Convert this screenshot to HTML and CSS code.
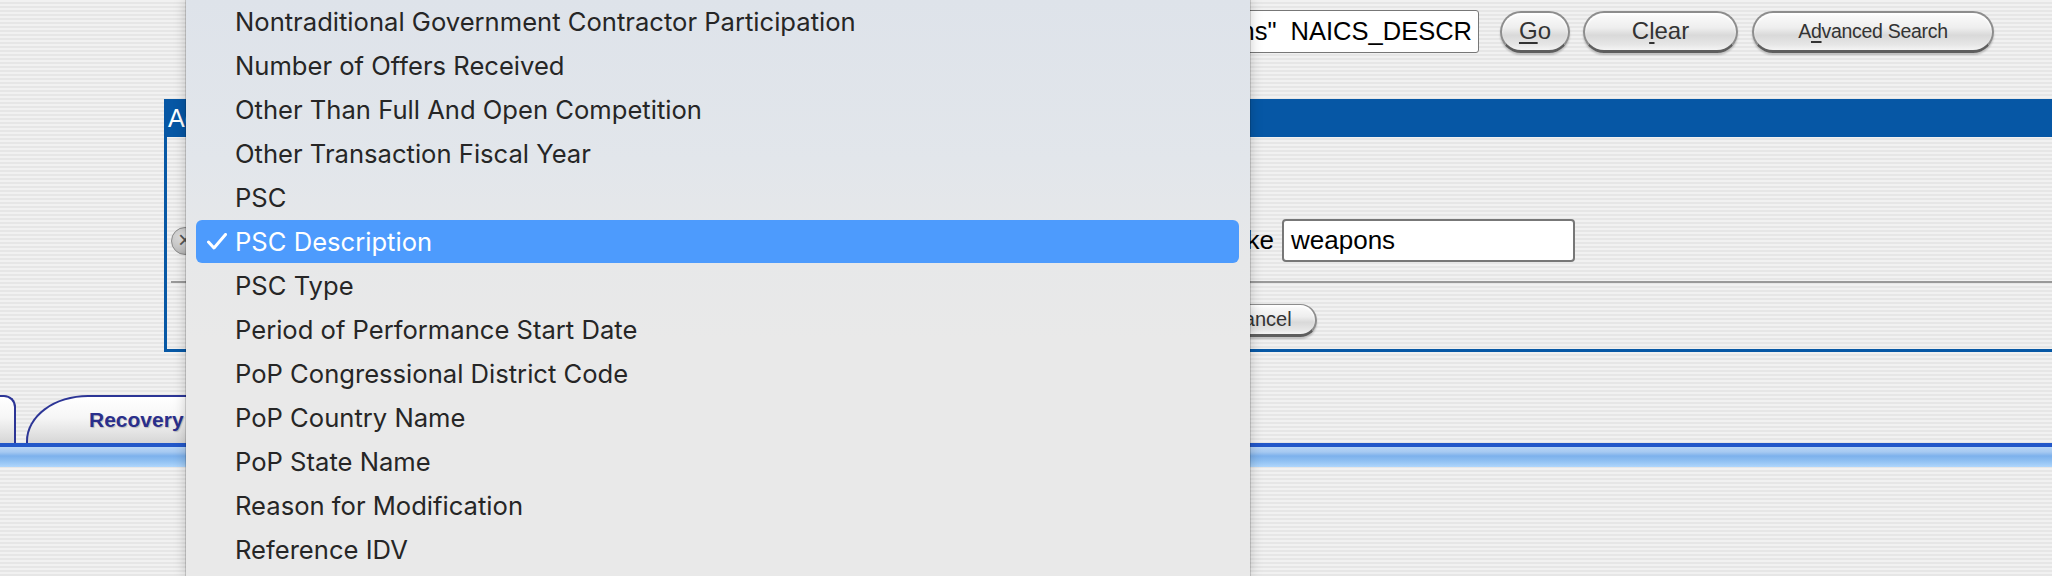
FILE: index.html
```html
<!DOCTYPE html>
<html lang="en">
<head>
    <meta charset="UTF-8">
    <title>Advanced Search</title>
    <link rel="stylesheet" href="styles.css">
</head>
<body>
    <div class="topbar">
        <div class="search-box"><span>PSC_DESCRIPTION like "weapons"&nbsp; NAICS_DESCR</span></div>
        <button class="aqua go"><u>G</u>o</button>
        <button class="aqua clear">C<u>l</u>ear</button>
        <button class="aqua advanced">A<u>d</u>vanced Search</button>
    </div>

    <!-- criteria dialog -->
    <div class="dialog">
        <div class="dialog-title">Advanced Search</div>
        <div class="dialog-body">
            <div class="criteria-row">
                <span class="remove-btn">&times;</span>
                <div class="field-select">PSC Description</div>
                <span class="operator">like</span>
                <div class="value-box">weapons</div>
            </div>
            <div class="separator"></div>
            <div class="dialog-actions">
                <button class="aqua small">Cancel</button>
            </div>
        </div>
    </div>

    <div class="tabs">
        <div class="tab first"></div>
        <div class="tab">Recovery</div>
    </div>
    <div class="tab-line"></div>

    <!-- open field list -->
    <ul class="menu">
        <li>Nontraditional Government Contractor Participation</li>
        <li>Number of Offers Received</li>
        <li>Other Than Full And Open Competition</li>
        <li>Other Transaction Fiscal Year</li>
        <li>PSC</li>
        <li class="selected">
            <svg class="check" width="20" height="17" viewBox="0 0 20 17"><polyline points="1.5,9 7,15 18.5,1.5" fill="none" stroke="#fff" stroke-width="3" stroke-linecap="round" stroke-linejoin="round"/></svg>PSC Description</li>
        <li>PSC Type</li>
        <li>Period of Performance Start Date</li>
        <li>PoP Congressional District Code</li>
        <li>PoP Country Name</li>
        <li>PoP State Name</li>
        <li>Reason for Modification</li>
        <li>Reference IDV</li>
    </ul>
</body>
</html>
```

FILE: styles.css
```css
html, body {
    overflow: hidden;
}
body {
    margin: 0;
    padding: 0;
    height: 576px;
    position: relative;
    font-family: "Liberation Sans", Arial, sans-serif;
    color: #000;
    background: repeating-linear-gradient(180deg, #f1f1f1 0, #f1f1f1 2px, #e6e6e6 2px, #e6e6e6 4px);
}

/* top search bar */
.topbar {
    display: flex;
    justify-content: flex-end;
    align-items: center;
    padding: 10px 58px 0 0;
    height: 43px;
    margin-bottom: 46px;
}
.search-box {
    width: 490px;
    height: 41px;
    display: flex;
    justify-content: flex-end;
    align-items: center;
    overflow: hidden;
    white-space: nowrap;
    padding-right: 6px;
    background: #fff;
    border: 1px solid #777;
    border-radius: 3px;
    font-size: 25.5px;
    margin-right: 21px;
}
.aqua {
    height: 42px;
    padding: 0;
    border: 2px solid #8d8d8d;
    border-bottom: 3px solid #5e5e5e;
    border-radius: 22px;
    background: linear-gradient(180deg, #fcfcfc 0%, #eeeeee 40%, #d9d9d9 60%, #e6e6e6 85%, #f4f4f4 100%);
    box-shadow: 0 2px 2px rgba(0, 0, 0, 0.2), inset 0 2px 2px rgba(255, 255, 255, 0.9);
    font-family: "Liberation Sans", Arial, sans-serif;
    color: #333;
    cursor: pointer;
}
.aqua u {
    text-decoration-thickness: 2px;
    text-underline-offset: 3px;
}
.go {
    width: 70px;
    font-size: 24px;
    margin-right: 13px;
}
.clear {
    width: 155px;
    font-size: 24px;
    margin-right: 14px;
}
.advanced {
    width: 242px;
    font-size: 19.5px;
    letter-spacing: -0.3px;
}

/* dialog */
.dialog {
    margin-left: 164px;
    margin-right: -40px;
    border-left: 3px solid #0758a5;
    border-bottom: 3px solid #0758a5;
}
.dialog-title {
    height: 38px;
    line-height: 38px;
    margin-left: -3px;
    padding-left: 4px;
    background-color: #0657a5;
    color: #fff;
    font-size: 25px;
}
.dialog-body {
    padding: 82px 0 12px 0;
}
.criteria-row {
    display: flex;
    align-items: center;
    height: 43px;
    padding-left: 4px;
}
.remove-btn {
    width: 26px;
    height: 26px;
    border-radius: 50%;
    border: 1px solid #8a8a8a;
    background: radial-gradient(circle at 40% 35%, #e4e4e4 0%, #c4c4c4 55%, #9d9d9d 100%);
    color: #555;
    font-size: 24px;
    line-height: 24px;
    text-align: center;
    margin-right: 11px;
}
.field-select {
    width: 1015px;
    height: 39px;
    border: 1px solid #777;
    background: #fff;
    font-size: 24px;
    line-height: 39px;
    padding-left: 6px;
    box-sizing: border-box;
    margin-right: 10px;
}
.operator {
    font-size: 26px;
    margin-right: 8px;
}
.value-box {
    width: 293px;
    height: 43px;
    box-sizing: border-box;
    border: 2px solid #777;
    border-radius: 4px;
    background: #fff;
    font-size: 26px;
    line-height: 39px;
    padding-left: 7px;
}
.separator {
    height: 2px;
    margin: 19px 0 0 4px;
    background-color: #999;
}
.dialog-actions {
    display: flex;
    padding: 21px 0 0 1038px;
}
.small {
    width: 112px;
    height: 33px;
    font-size: 20px;
    border-radius: 17px;
    border-width: 1px 2px 3px 1px;
}

/* tabs */
.tabs {
    display: flex;
    align-items: flex-end;
    margin-top: 43px;
    height: 48px;
}
.tab {
    height: 48px;
    width: 260px;
    margin-left: 10px;
    box-sizing: border-box;
    border: 2px solid #2c3596;
    border-bottom: none;
    border-radius: 62px 14px 0 0 / 46px 14px 0 0;
    background: linear-gradient(180deg, #ffffff 0%, #f6f6f6 45%, #d6d6d6 100%);
    padding: 11px 0 0 61px;
    font-family: "Liberation Sans", Arial, sans-serif;
    font-weight: bold;
    font-size: 21px;
    color: #2a2f8c;
    text-shadow: 1px 1px 1px rgba(0, 0, 0, 0.2);
}
.tab.first {
    width: 60px;
    margin-left: -44px;
    border-radius: 0 12px 0 0;
    padding: 0;
}
.tab-line {
    height: 20px;
    border-top: 4px solid #2358c9;
    background: linear-gradient(180deg, #b8d6f6 0%, #a6c9f1 25%, #7db1ec 45%, #8fc0f2 70%, #afd6fc 100%);
}

/* popup list */
.menu {
    position: absolute;
    top: 0;
    left: 186px;
    width: 1064px;
    height: 576px;
    margin: 0;
    padding: 0;
    list-style: none;
    background: linear-gradient(180deg, #dee3ea 0px, #e2e6eb 160px, #e7e8e9 260px, #e9e9e9 340px);
    box-shadow: 0 0 0 1px rgba(0, 0, 0, 0.14), 0 0 12px rgba(0, 0, 0, 0.22);
    font-family: Inter, "Noto Sans", sans-serif;
    font-size: 25.6px;
    color: #262626;
}
.menu li {
    height: 44px;
    line-height: 44px;
    margin: 0 11px 0 10px;
    padding-left: 39px;
    white-space: nowrap;
    position: relative;
}
.menu li.selected {
    background-color: #4d9bfd;
    color: #fff;
    border-radius: 6px;
    height: 43px;
    line-height: 43px;
    margin-bottom: 1px;
}
.check {
    position: absolute;
    left: 11px;
    top: 13px;
}
```
